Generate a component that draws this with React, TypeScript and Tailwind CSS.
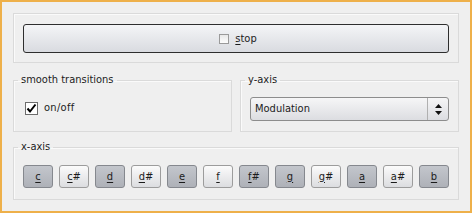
import React, { useState } from 'react';

const NOTES = ['c', 'c#', 'd', 'd#', 'e', 'f', 'f#', 'g', 'g#', 'a', 'a#', 'b'];
const INITIAL_ON = ['c', 'd', 'e', 'f#', 'g', 'a', 'b'];

export default function App() {
  const [active, setActive] = useState<string[]>(INITIAL_ON);
  const [smooth, setSmooth] = useState(true);

  const toggle = (n: string) =>
    setActive((prev) => (prev.includes(n) ? prev.filter((x) => x !== n) : [...prev, n]));

  return (
    <div className="w-[472px] h-[213px] border-2 border-[#eeb04a] bg-[#efefef] font-['DejaVu_Sans_Condensed','DejaVu_Sans',sans-serif] text-[11px] leading-[14px] text-[#1c1c1c] flex flex-col px-[11px]">
      {/* Stop */}
      <div className="mt-[11px] h-[50px] border border-[#dadada] shadow-[inset_1px_1px_0_#fafafa] pt-[10px] px-[9px]">
        <button className="w-full h-[29px] rounded-[3px] border border-[#2e2e2e] bg-gradient-to-b from-[#f4f5f7] to-[#d9dbe0] flex items-center justify-center gap-[6px] pl-[4px]">
          <span className="w-[10px] h-[10px] border border-[#9a9a9a] bg-gradient-to-b from-[#e8e8e8] to-[#fdfdfd]" />
          <span>
            <span className="underline underline-offset-2">s</span>top
          </span>
        </button>
      </div>

      {/* Row */}
      <div className="mt-[10px] flex gap-[8px]">
        <fieldset className="w-[219px] h-[59px] border border-[#dadada] shadow-[inset_1px_1px_0_#fafafa] p-0">
          <legend className="ml-[4px] px-[3px]">smooth transitions</legend>
          <div className="px-[11px] pt-[14px]">
            <label className="flex items-center gap-[6px] cursor-pointer" onClick={() => setSmooth(!smooth)}>
              <span className="w-[13px] h-[13px] border border-[#6c6c6c] bg-white flex items-center justify-center">
                {smooth && (
                  <svg width="11" height="11" viewBox="0 0 11 11">
                    <path d="M1.5 5.5 L4 8.5 L9.5 1.5" stroke="#000" strokeWidth="2" fill="none" />
                  </svg>
                )}
              </span>
              <span className="tracking-[0.3px]">on/off</span>
            </label>
          </div>
        </fieldset>
        <fieldset className="w-[219px] h-[59px] border border-[#dadada] shadow-[inset_1px_1px_0_#fafafa] p-0">
          <legend className="ml-[4px] px-[3px]">y-axis</legend>
          <div className="px-[9px] pt-[10px]">
            <div className="h-[24px] rounded-[3px] border border-[#8d8d8d] bg-gradient-to-b from-[#f6f6f7] to-[#dcdde1] flex items-center">
              <span className="flex-1 pl-[4px]">Modulation</span>
              <span className="w-[21px] h-full border-l border-[#b0b0b0] flex items-center justify-center">
                <svg width="9" height="13" viewBox="0 0 9 13">
                  <path d="M4.5 1 L8 5 L1 5 Z" fill="#111" />
                  <path d="M4.5 12 L8 8 L1 8 Z" fill="#111" />
                </svg>
              </span>
            </div>
          </div>
        </fieldset>
      </div>

      {/* x-axis */}
      <fieldset className="mt-[8px] h-[60px] border border-[#dadada] shadow-[inset_1px_1px_0_#fafafa] p-0">
        <legend className="ml-[4px] px-[3px]">x-axis</legend>
        <div className="flex gap-[6px] px-[9px] pt-[11px]">
          {NOTES.map((n) => {
            const on = active.includes(n);
            return (
              <button
                key={n}
                onClick={() => toggle(n)}
                className={`w-[30px] h-[23px] rounded-[3px] border flex items-center justify-center ${
                  on
                    ? 'border-[#85888e] bg-gradient-to-b from-[#c3c6cc] to-[#aeb1b8]'
                    : 'border-[#9c9c9c] bg-gradient-to-b from-[#fbfbfb] to-[#dcdde0]'
                }`}
              >
                <span className="underline underline-offset-2">{n[0]}</span>
                {n.slice(1)}
              </button>
            );
          })}
        </div>
      </fieldset>
    </div>
  );
}
